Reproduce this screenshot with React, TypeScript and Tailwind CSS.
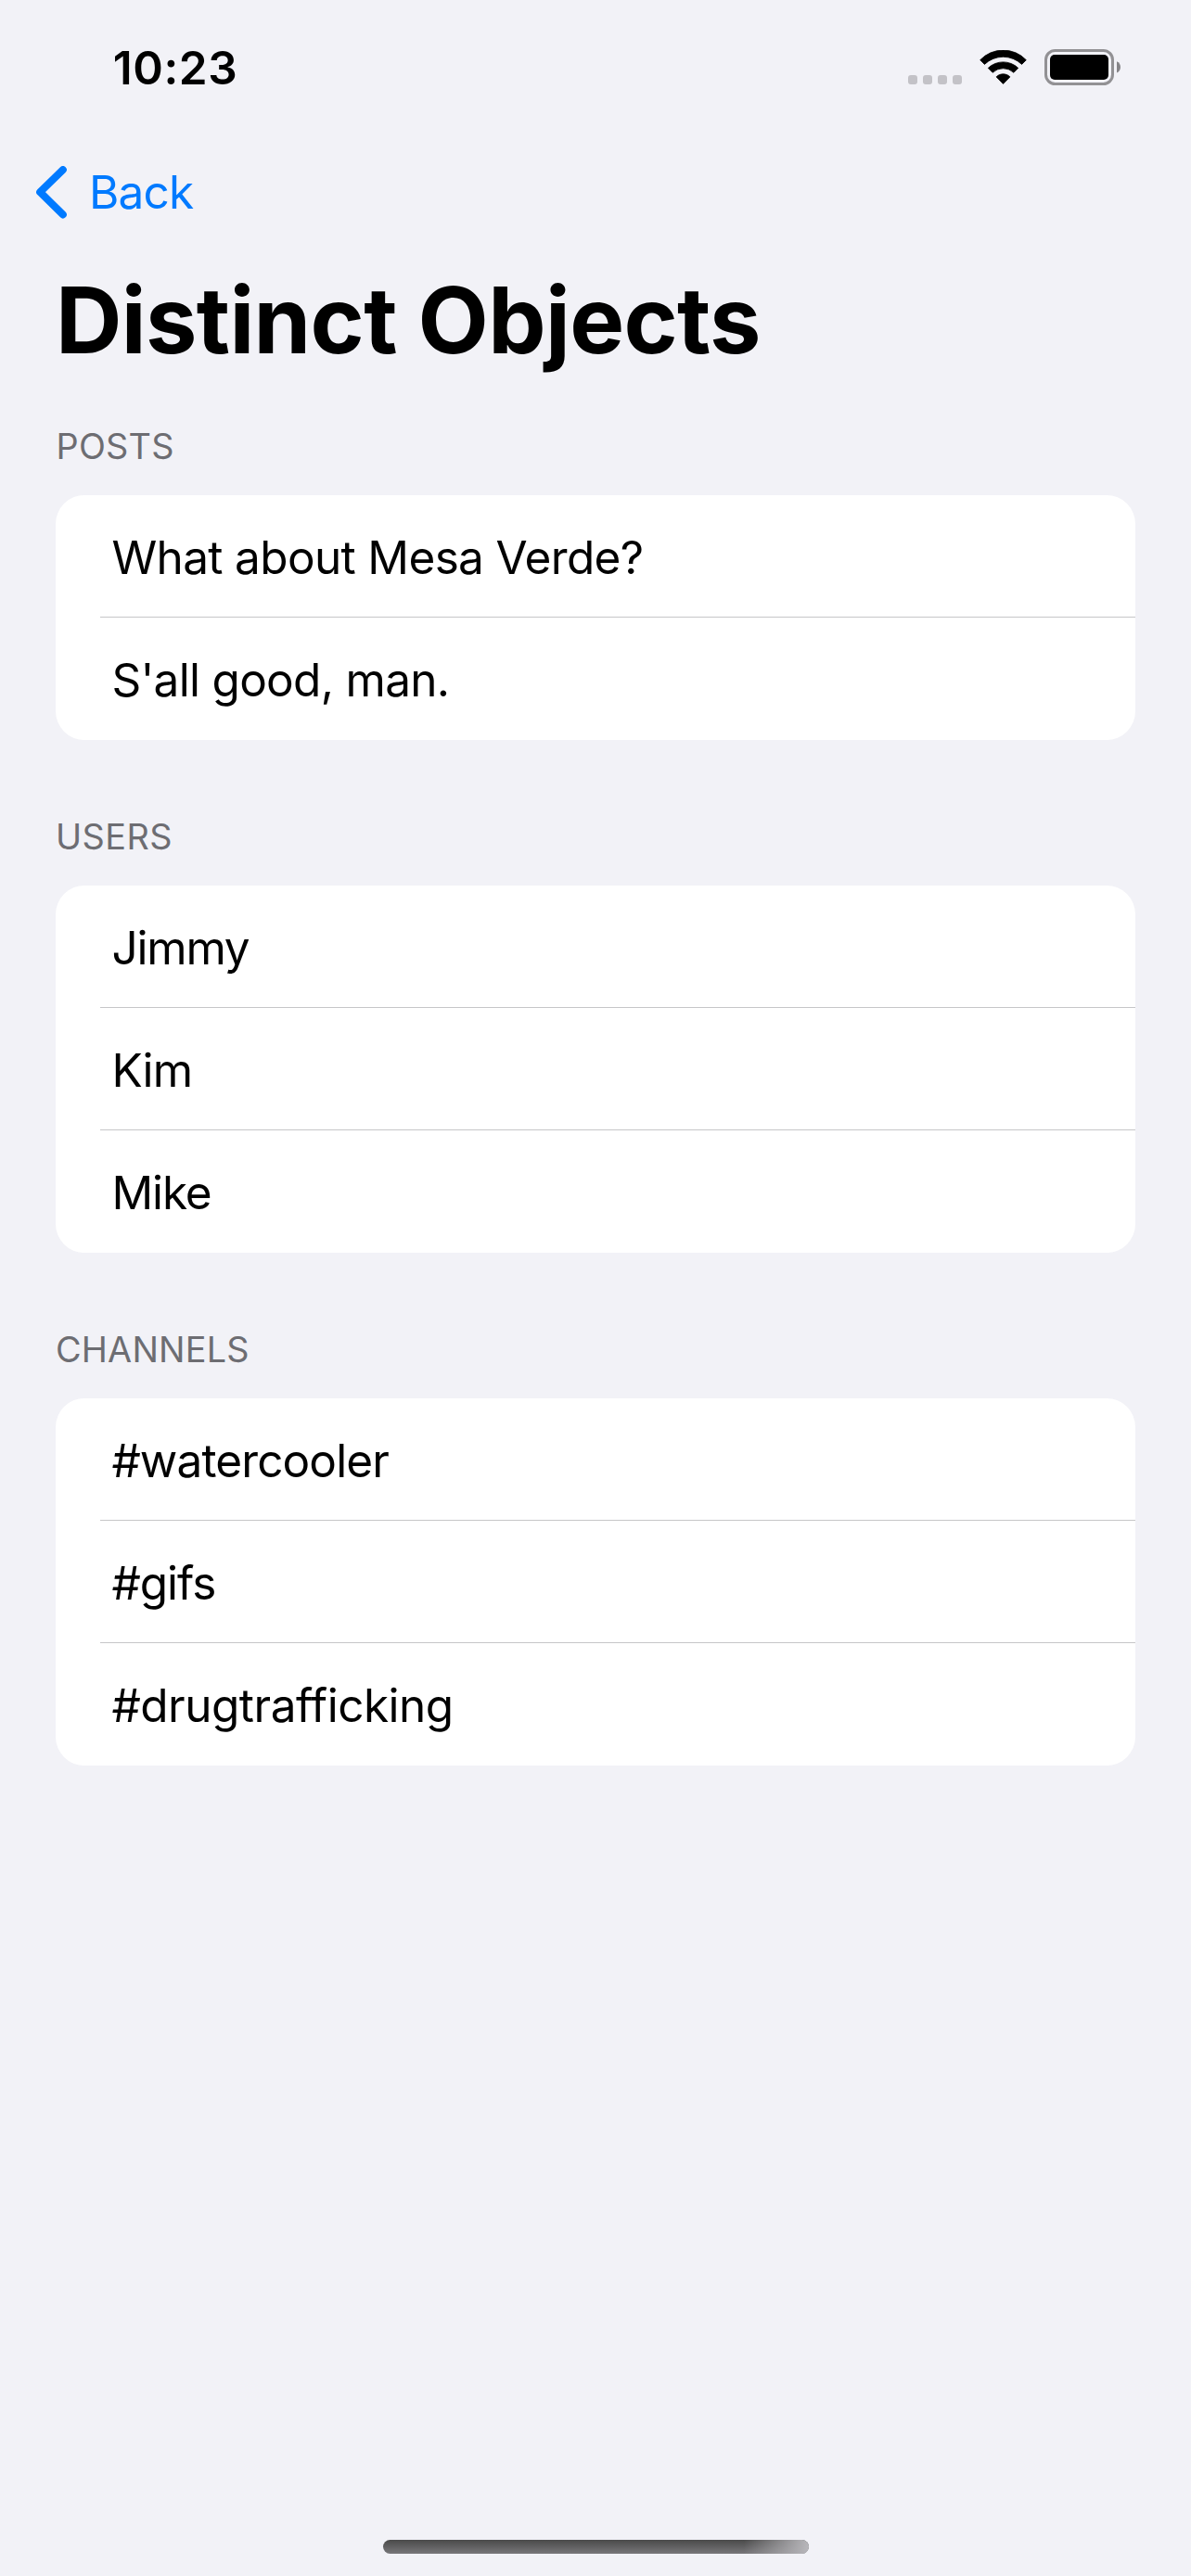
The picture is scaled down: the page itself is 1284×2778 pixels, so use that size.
type Row = { text: string; tracking: string };
type Section = { title: string; tracking: string; indent: string; rows: Row[] };

const sections: Section[] = [
  {
    title: "POSTS",
    tracking: "tracking-[0.25px]",
    indent: "pl-[60.5px]",
    rows: [
      { text: "What about Mesa Verde?", tracking: "tracking-[-0.65px]" },
      { text: "S'all good, man.", tracking: "tracking-[-0.7px]" },
    ],
  },
  {
    title: "USERS",
    tracking: "tracking-[0.45px]",
    indent: "pl-[60px]",
    rows: [
      { text: "Jimmy", tracking: "tracking-[-1.2px]" },
      { text: "Kim", tracking: "tracking-[-0.8px]" },
      { text: "Mike", tracking: "tracking-[-1.1px]" },
    ],
  },
  {
    title: "CHANNELS",
    tracking: "tracking-[0.2px]",
    indent: "pl-[60px]",
    rows: [
      { text: "#watercooler", tracking: "tracking-[-0.88px]" },
      { text: "#gifs", tracking: "tracking-[-1px]" },
      { text: "#drugtrafficking", tracking: "tracking-[-0.5px]" },
    ],
  },
];

function CellularDots() {
  return (
    <div className="mt-[27px] flex gap-[6px]">
      {[0, 1, 2, 3].map((i) => (
        <span key={i} className="size-[10px] rounded-[3px] bg-[#c3c2c7]" />
      ))}
    </div>
  );
}

function WifiIcon() {
  return (
    <svg width="51" height="37" viewBox="0 0 51 37" className="ml-[19px]" fill="black" stroke="black" strokeWidth="0.8" strokeLinejoin="round">
      <path d="M0.7 10.7A34.3 34.3 0 0 1 50.3 10.7L45.6 15.4A29 29 0 0 0 5.4 15.4Z" />
      <path d="M9.3 19.4A23.4 23.4 0 0 1 41.7 19.4L36.9 24.3A16.6 16.6 0 0 0 14.1 24.3Z" />
      <path d="M18.1 28.9C22 24.8 29 24.8 32.9 28.9L25.5 36.4Z" />
    </svg>
  );
}

function BatteryIcon() {
  return (
    <svg width="83" height="39" viewBox="0 0 83 39" className="ml-[19px] -mt-px">
      <rect x="1.5" y="1.5" width="72" height="36" rx="10" fill="none" stroke="#929194" strokeWidth="3" />
      <rect x="6" y="6" width="63" height="27" rx="5" fill="black" />
      <path d="M78 13.3C83.3 15.5 83.3 23.3 78 25.5Z" fill="#858487" />
    </svg>
  );
}

function StatusBar() {
  return (
    <header className="flex h-[177px] items-start justify-between pl-[121.7px] pr-[75px] pt-[43px]">
      <span className="text-[49.5px] font-semibold leading-[60px] tracking-[0.6px]">10:23</span>
      <div className="flex items-start pt-[11px]">
        <CellularDots />
        <WifiIcon />
        <BatteryIcon />
      </div>
    </header>
  );
}

function BackButton() {
  return (
    <button className="flex h-[60px] items-center pl-[39px] text-[#007aff]">
      <svg width="33" height="57" viewBox="0 0 33 57" fill="none" stroke="currentColor" strokeWidth="8" strokeLinecap="round" strokeLinejoin="round">
        <path d="M28.8 4.1L4.2 28.2L28.8 52.4" />
      </svg>
      <span className="ml-[24px] text-[49.5px] leading-[60px] tracking-[-0.8px]">Back</span>
    </button>
  );
}

function ListSection({ section }: { section: Section }) {
  return (
    <section>
      <h2 className={`mb-[30px] text-[37.8px] leading-[46px] text-[#6d6d72] ${section.tracking} ${section.indent}`}>
        {section.title}
      </h2>
      <ul className="mx-[60px] overflow-hidden rounded-[31px] bg-white">
        {section.rows.map((row, i) => (
          <li key={row.text} className="h-[132px] pl-[48px]">
            <div
              className={`h-[132px] whitespace-nowrap pl-[12.4px] text-[49.5px] leading-[134px] ${row.tracking} ${
                i < section.rows.length - 1 ? "border-b border-[#c6c6c8]" : ""
              }`}
            >
              {row.text}
            </div>
          </li>
        ))}
      </ul>
    </section>
  );
}

export default function App() {
  return (
    <main className="flex h-[2778px] w-[1284px] flex-col overflow-hidden bg-[#f2f2f7] font-['Inter',sans-serif] text-black">
      <StatusBar />
      <BackButton />
      <h1 className="mb-[53px] mt-[48px] pl-[60px] text-[99px] font-bold leading-[120px] tracking-[-0.65px]">
        Distinct Objects
      </h1>
      <div className="flex flex-col gap-[81px]">
        {sections.map((s) => (
          <ListSection key={s.title} section={s} />
        ))}
      </div>
      <div className="mb-[24px] ml-[413px] mt-auto h-[15px] w-[459px] overflow-hidden rounded-full bg-linear-to-b from-[#4a4a4a] to-[#78777a]">
        <div className="ml-auto h-full w-[70px] bg-linear-to-r from-transparent to-[#b8b7bb]" />
      </div>
    </main>
  );
}
